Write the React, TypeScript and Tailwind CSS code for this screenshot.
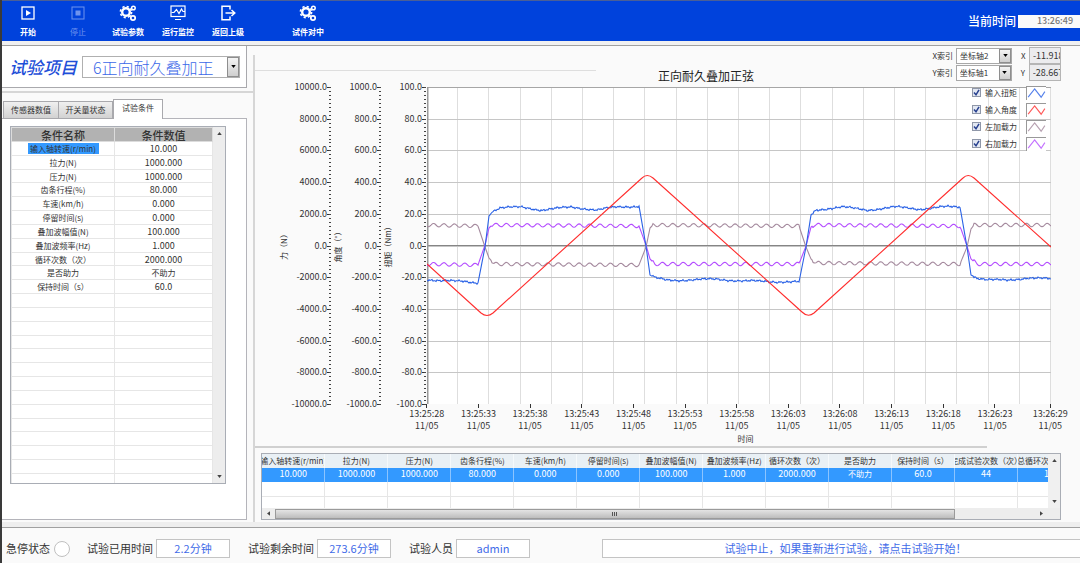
import type { ReactNode } from 'react';

interface ToolButtonProps {
  label: string;
  disabled?: boolean;
  className?: string;
  children: ReactNode;
}

interface Signal {
  name: string;
  color: string;
  path: string;
}

type Knot = [number, number];

const conditions = [
  ['输入轴转速(r/min)', '10.000'],
  ['拉力(N)', '1000.000'],
  ['压力(N)', '1000.000'],
  ['齿条行程(%)', '80.000'],
  ['车速(km/h)', '0.000'],
  ['停留时间(s)', '0.000'],
  ['叠加波幅值(N)', '100.000'],
  ['叠加波频率(Hz)', '1.000'],
  ['循环次数（次）', '2000.000'],
  ['是否助力', '不助力'],
  ['保持时间（s）', '60.0'],
];

const resultColumns = [
  ...conditions,
  ['完成试验次数（次）', '44'],
  ['总循环次数（次）', '10'],
];

const timeLabels = [
  '13:25:28', '13:25:33', '13:25:38', '13:25:43', '13:25:48', '13:25:53', '13:25:58',
  '13:26:03', '13:26:08', '13:26:13', '13:26:18', '13:26:23', '13:26:29',
];

const axes = [
  { title: '力（N）', scale: 100, tickX: 76, titleX: 32 },
  { title: '角度（°）', scale: 10, tickX: 126, titleX: 86 },
  { title: '扭矩（Nm）', scale: 1, tickX: 171, titleX: 136 },
];

const PLOT_W = 624;
const PLOT_H = 317;
const STEPS = Array.from({ length: 11 }, (_, i) => i);

// Numbers are set one size larger than Chinese text
const valueSize = (value: string) => (/^[\d.]+$/.test(value) ? 'text-[9px]' : 'text-[8px]');

// Linear interpolation through the knots
const levelAt = (knots: Knot[], x: number) => {
  for (let i = 1; i < knots.length; i++) {
    const [x0, y0] = knots[i - 1];
    const [x1, y1] = knots[i];
    if (x <= x1) return y0 + ((y1 - y0) * (x - x0)) / (x1 - x0);
  }
  return knots[knots.length - 1][1];
};

// Reversals of the rack direction, no ripple is visible there
const reversals = [51, 212, 372, 533];
const inReversal = (x: number) => reversals.some(r => x > r && x < r + 14);

const tracePath = (knots: Knot[], ripple: (x: number) => number) => {
  const points: string[] = [];
  for (let x = 0; x <= PLOT_W; x++) {
    const y = levelAt(knots, x) + (inReversal(x) ? 0 : ripple(x));
    points.push(`${x} ${y.toFixed(1)}`);
  }
  return `M${points.join('L')}`;
};

const wave = (x: number) => -1.7 * Math.sin(((x - 4) * Math.PI * 2) / 10.4);
const noise = (x: number) =>
  0.6 * Math.sin(x * 2.3) + 0.5 * Math.sin(x * 0.9 + 1) + 0.7 * Math.sin(x * 0.13);

const torque: Knot[] = [
  [0, 193], [20, 193], [45, 196], [51, 196], [58, 160], [62, 129], [66, 124], [73, 121], [95, 120], [115, 123],
  [145, 120], [170, 123], [190, 120], [212, 119], [219, 159], [223, 188], [228, 191], [240, 193], [265, 193],
  [290, 192], [315, 194], [372, 195], [379, 160], [384, 128], [389, 123], [396, 122], [415, 120], [440, 123],
  [468, 120], [492, 122], [515, 120], [533, 120], [540, 160], [544, 188], [550, 191], [560, 193], [580, 193],
  [600, 191], [624, 192],
];
const angle =
  'M0 177L54 226Q60 231 66 226L215 91Q220 86 226 91L375 225Q381 231 387 226L536 91Q541 86 547 91L624 160';
const leftForce: Knot[] = [
  [0, 138], [51, 139], [58, 160], [62, 171], [67, 177], [212, 178], [219, 160], [223, 141], [226, 138],
  [372, 139], [379, 160], [384, 172], [389, 176], [533, 177], [540, 160], [544, 142], [547, 138], [624, 138],
];
const rightForce: Knot[] = [
  [0, 177], [51, 178], [58, 158], [62, 141], [65, 138], [212, 139], [219, 158], [223, 172], [228, 177],
  [372, 177], [379, 159], [384, 140], [387, 138], [533, 139], [540, 159], [544, 172], [550, 177], [624, 177],
];

const signals: Signal[] = [
  { name: '输入扭矩', color: '#2a62e6', path: tracePath(torque, noise) },
  { name: '输入角度', color: '#ff2e2e', path: angle },
  { name: '左加载力', color: '#a58a9e', path: tracePath(leftForce, wave) },
  { name: '右加载力', color: '#b44dff', path: tracePath(rightForce, wave) },
];

function ToolButton({ label, disabled, className = '', children }: ToolButtonProps) {
  return (
    <button
      disabled={disabled}
      className={`w-[50px] h-full pt-[3px] flex flex-col items-center text-white text-[8px] leading-3 font-bold whitespace-nowrap disabled:text-[#6f93ee] disabled:font-normal ${className}`}
    >
      <span className="h-[18px] mb-1 flex items-center justify-center">{children}</span>
      {label}
    </button>
  );
}

function GearsIcon() {
  return (
    <svg viewBox="0 0 18 18" className="size-[18px]" fill="none" stroke="currentColor">
      <circle cx="7" cy="8" r="3.8" strokeWidth="2.4" />
      <circle cx="7" cy="8" r="5.6" strokeWidth="1.6" strokeDasharray="2.2 2.2" />
      <circle cx="14.4" cy="4" r="1.8" strokeWidth="1.5" />
      <circle cx="14" cy="14" r="2.2" strokeWidth="1.7" />
      <path d="M10.5 5.5l2-1M10.5 11l1.6 1.5" strokeWidth="1.2" />
    </svg>
  );
}

function Arrow({ className = '' }: { className?: string }) {
  return (
    <svg viewBox="0 0 6 4" className={`w-[5px] h-[3px] ${className}`}>
      <path d="M0 0h6L3 4z" fill="currentColor" />
    </svg>
  );
}

function DropButton() {
  return (
    <span className="absolute right-px inset-y-px w-3 flex items-center justify-center border border-[#8e8e8e] bg-linear-to-b from-[#f4f4f4] to-[#cfcfcf] text-black pointer-events-none">
      <Arrow />
    </span>
  );
}

function IndexRow({ axis, option, value }: { axis: string; option: string; value: string }) {
  return (
    <div className="flex items-center text-[8px] text-[#333]">
      <label htmlFor={`index-${axis}`} className="mr-[3px]">{axis}索引</label>
      <div className="relative mr-[9px]">
        <select
          id={`index-${axis}`}
          className="appearance-none block w-[56px] h-4 pl-[3px] border border-[#a8a8a8] bg-white text-[8px] leading-3"
        >
          <option>{option}</option>
        </select>
        <DropButton />
      </div>
      <label htmlFor={`cursor-${axis}`} className="w-2">{axis}</label>
      <input
        id={`cursor-${axis}`}
        readOnly
        defaultValue={value}
        className="w-8 h-[17px] pl-[3px] border border-[#b5b5b5] bg-[#ececee] text-[9px]"
      />
    </div>
  );
}

function StatusField({ id, label, value }: { id: string; label: string; value: string }) {
  return (
    <div className="flex items-center mr-[18px]">
      <label htmlFor={id} className="mr-[3px]">{label}</label>
      <input
        id={id}
        readOnly
        defaultValue={value}
        className="w-[74px] h-[19px] border border-[#c4c4c4] bg-white text-center text-[#3f6be8]"
      />
    </div>
  );
}

function Toolbar() {
  return (
    <header className="h-[41px] flex items-center bg-[#0042dc] border-t border-[#4a5f96] pl-px">
      <ToolButton label="开始">
        <svg viewBox="0 0 14 14" className="size-[14px]" fill="none" stroke="currentColor" strokeWidth="1.3">
          <rect x="1" y="1" width="12" height="12" />
          <path d="M5 4v6l5-3z" fill="currentColor" stroke="none" />
        </svg>
      </ToolButton>
      <ToolButton label="停止" disabled>
        <svg viewBox="0 0 14 14" className="size-[14px]" fill="none" stroke="currentColor" strokeWidth="1">
          <rect x="1" y="1" width="12" height="12" />
          <rect x="4.5" y="4.5" width="5" height="5" fill="currentColor" stroke="none" />
        </svg>
      </ToolButton>
      <ToolButton label="试验参数">
        <GearsIcon />
      </ToolButton>
      <ToolButton label="运行监控">
        <svg viewBox="0 0 16 16" className="size-4" fill="none" stroke="currentColor" strokeWidth="1.2">
          <rect x="1" y="1" width="14" height="10.5" />
          <path d="M1.5 7.5H4l2.5-3 2.5 4 2.5-4.5 1.5 2.5h2M5 14.5h6" />
        </svg>
      </ToolButton>
      <ToolButton label="返回上级">
        <svg viewBox="0 0 16 16" className="size-4" fill="none" stroke="currentColor" strokeWidth="1.5">
          <path d="M10 4.5V1.2H2v13.6h8v-3.3M5.5 8h9M11.5 5l3.3 3-3.3 3" />
        </svg>
      </ToolButton>
      <ToolButton label="试件对中" className="ml-[30px]">
        <GearsIcon />
      </ToolButton>
      <div className="ml-auto flex items-center">
        <label htmlFor="clock" className="mr-[2px] text-white text-[12px] font-medium">当前时间</label>
        <input
          id="clock"
          readOnly
          defaultValue="13:26:49"
          className="w-[62px] h-[13px] pl-3 bg-[#fafafa] text-center text-[9px] text-[#777] font-medium"
        />
      </div>
    </header>
  );
}

function ConditionTable() {
  return (
    <div className="w-[216px] h-[358px] flex border border-[#a9adb5] bg-white">
      <div className="flex-1 overflow-hidden">
        <table className="w-full h-[361px] table-fixed border-collapse text-center text-[8px] leading-[11px] text-[#333]">
          <thead>
            <tr className="h-[14px] bg-[#b2b2b2] text-[11px] leading-3">
              <th className="w-[103px] p-0 font-medium border border-[#dcdcdc]">条件名称</th>
              <th className="p-0 font-medium border border-[#dcdcdc]">条件数值</th>
            </tr>
          </thead>
          <tbody>
            {Array.from({ length: 25 }, (_, i) => {
              const [name, value] = conditions[i] ?? ['\u00a0', '\u00a0'];
              return (
                <tr key={i} className="h-[13px]">
                  <td className="p-0 border border-[#e6e6e6]">
                    <span className={i === 0 ? 'block w-[71px] mx-auto bg-[#3399ff]' : 'block'}>{name}</span>
                  </td>
                  <td className={`p-0 border border-[#e6e6e6] ${valueSize(value)} leading-[11px]`}>{value}</td>
                </tr>
              );
            })}
          </tbody>
        </table>
      </div>
      <div className="w-3 py-[5px] flex flex-col items-center justify-between bg-[#ededed] text-[#444]">
        <Arrow className="rotate-180" />
        <Arrow />
      </div>
    </div>
  );
}

function Sidebar() {
  return (
    <aside className="w-[245px] mb-[2px] shrink-0 flex flex-col">
      <div className="h-[42px] pl-[7px] flex items-center bg-white border-r border-b border-[#a9a9ad]">
        <label htmlFor="project" className="w-[73px] text-[17px] text-[#1f4fd8] font-medium italic">试验项目</label>
        <div className="relative">
          <select
            id="project"
            className="appearance-none block w-[158px] h-[22px] pl-[10px] border border-[#b0b0b0] bg-white text-[16px] leading-5 font-light text-[#3c68e8]"
          >
            <option>6正向耐久叠加正</option>
          </select>
          <DropButton />
        </div>
      </div>
      <div className="w-[252px] h-[5px] mb-[6px] border-b-2 border-[#d6d6d6]" />
      <div className="relative z-10 -mb-px flex items-end pl-px text-[8px] text-[#333]">
        <button className="w-[56px] h-[18px] border border-[#a9a9ad] bg-linear-to-b from-[#f0f0f0] to-[#d2d2d2]">传感器数值</button>
        <button className="w-[55px] h-[18px] -ml-px border border-[#a9a9ad] bg-linear-to-b from-[#f0f0f0] to-[#d2d2d2]">开关量状态</button>
        <button className="w-[50px] h-5 pb-1 border border-b-0 border-[#a9a9ad] bg-white">试验条件</button>
      </div>
      <div className="flex-1 pt-[7px] pb-8 pl-2 bg-white border border-l-0 border-[#b4b4ba]">
        <ConditionTable />
      </div>
    </aside>
  );
}

function AxisScales() {
  return (
    <svg width="172" height={PLOT_H} className="shrink-0 overflow-visible" fill="#333" fontSize="9">
      {axes.map(axis => (
        <g key={axis.title}>
          {STEPS.map(i => {
            const y = Math.round((i * PLOT_H) / 10);
            return (
              <g key={i}>
                <path d={`M${axis.tickX - 4} ${y + 0.5}h4`} stroke="#333" />
                <text x={axis.tickX - 4} y={y + 3} textAnchor="end">
                  {((5 - i) * 20 * axis.scale).toFixed(1)}
                </text>
              </g>
            );
          })}
          {Array.from({ length: 81 }, (_, i) => (
            <path key={i} d={`M${axis.tickX - 2} ${Math.round((i * PLOT_H) / 80) + 0.5}h2`} stroke="#444" />
          ))}
          <text transform={`translate(${axis.titleX} 158) rotate(-90)`} textAnchor="middle" fontSize="8">
            {axis.title}
          </text>
        </g>
      ))}
    </svg>
  );
}

function Plot() {
  return (
    <svg
      viewBox={`0 0 ${PLOT_W} ${PLOT_H}`}
      preserveAspectRatio="none"
      className="block w-full h-[317px] bg-white"
      fill="none"
    >
      {Array.from({ length: 20 }, (_, i) => (
        <path key={i} d={`M${Math.round((i + 1) * 31.2) - 0.5} 0V${PLOT_H}`} stroke="#dedede" />
      ))}
      {STEPS.slice(0, 10).map(i => (
        <path key={i} d={`M0 ${Math.round((i * PLOT_H) / 10) + 0.5}H${PLOT_W}`} stroke={i === 0 ? '#a6a6a6' : '#c6c6c6'} />
      ))}
      <path d={`M0 158.5H${PLOT_W}`} stroke="#858585" />
      <path d={`M0.5 0V${PLOT_H}`} stroke="#999" strokeWidth="2" />
      {[2, 3, 0, 1].map(i => (
        <path
          key={signals[i].name}
          d={signals[i].path}
          stroke={signals[i].color}
          strokeWidth="1.1"
          vectorEffect="non-scaling-stroke"
        />
      ))}
    </svg>
  );
}

function Legend() {
  return (
    <div className="absolute top-[-2px] right-[5px] flex flex-col gap-[2px]">
      {signals.map(signal => (
        <div key={signal.name} className="h-[15px] flex items-center text-[8px] text-[#333]">
          <label className="relative w-[54px] flex items-center gap-1">
            <input
              type="checkbox"
              defaultChecked
              className="peer appearance-none size-[9px] border border-[#8f97a8] bg-[#e3e8f2]"
            />
            <svg viewBox="0 0 9 9" className="absolute left-0 size-[9px] hidden peer-checked:block" fill="none" stroke="#27408f" strokeWidth="1.5">
              <path d="M2 4.5l2 2.3L7 1.8" />
            </svg>
            {signal.name}
          </label>
          <svg viewBox="0 0 20 14" className="w-5 h-[14px] border-t border-l border-[#999] bg-white" fill="none">
            <path d="M1 11l7-9 7 9 4-6" stroke={signal.color} strokeWidth="1.2" strokeOpacity="0.8" />
          </svg>
        </div>
      ))}
    </div>
  );
}

function ChartPanel() {
  return (
    <section>
      <div className="h-[41px] flex items-start">
        <div className="w-[341px] mt-[24px] border-t border-[#dedede]" />
        <h2 className="ml-[62px] mt-[21px] text-[12px] leading-[18px] text-[#222]">正向耐久叠加正弦</h2>
        <div className="ml-auto mr-[19px] mt-px flex flex-col">
          <IndexRow axis="X" option="坐标轴2" value="-11.918" />
          <IndexRow axis="Y" option="坐标轴1" value="-28.667" />
        </div>
      </div>
      <div className="flex pr-[29px]">
        <AxisScales />
        <div className="relative flex-1 min-w-0">
          <Plot />
          <Legend />
        </div>
      </div>
      <div className="ml-[146px] grid grid-cols-[repeat(12,516fr)_592fr] text-center text-[9px] leading-3 text-[#333]">
        {timeLabels.map(time => (
          <div key={time} className="flex flex-col items-center">
            <span className="w-px h-1 bg-[#333]" />
            <span>{time}</span>
            <span>11/05</span>
          </div>
        ))}
      </div>
      <div className="h-[14px] pl-[156px] text-center text-[8px] leading-[14px] text-[#333]">时间</div>
      <div className="w-[732px] border-t-2 border-[#d0d0d0]" />
    </section>
  );
}

function ResultTable() {
  return (
    <div className="ml-[6px] mr-[19px] mt-[5px] border border-[#a9adb5] bg-white">
      <div className="h-[54px] flex">
        <div className="flex-1 min-w-0 overflow-hidden">
          <table className="w-[819px] table-fixed border-collapse text-center">
            <thead>
              <tr className="h-[14px] bg-[#e9f0f5] text-[8px] text-[#333]">
                {resultColumns.map(([name]) => (
                  <th key={name} className="p-0 font-normal align-top border-r border-[#f6f9fb]">
                    <div className="flex justify-center overflow-hidden whitespace-nowrap leading-[13px]">
                      <span>{name}</span>
                    </div>
                  </th>
                ))}
              </tr>
            </thead>
            <tbody>
              <tr className="h-[14px] bg-[#3399ff] text-white">
                {resultColumns.map(([name, value]) => (
                  <td key={name} className={`p-0 align-top border-r border-[#8cc4ff] ${valueSize(value)} leading-3`}>{value}</td>
                ))}
              </tr>
              {[0, 1].map(row => (
                <tr key={row} className="h-[14px]">
                  {resultColumns.map(([name]) => (
                    <td key={name} className="p-0 border-r border-b border-[#e6e6e6]" />
                  ))}
                </tr>
              ))}
            </tbody>
          </table>
        </div>
        <div className="w-3 py-[5px] flex flex-col items-center justify-between bg-[#f0f0f0] text-[#444]">
          <Arrow className="rotate-180" />
          <Arrow />
        </div>
      </div>
      <div className="h-[11px] pl-1 pr-4 flex items-center bg-[#ededed] text-[#444]">
        <Arrow className="rotate-90 mr-1" />
        <div className="flex-1">
          <div className="w-[89%] h-[10px] flex items-center justify-center gap-px border border-[#9a9a9a] bg-linear-to-b from-[#e4e4e4] to-[#bdbdbd]">
            <span className="w-px h-1 bg-[#555]" />
            <span className="w-px h-1 bg-[#555]" />
            <span className="w-px h-1 bg-[#555]" />
          </div>
        </div>
        <Arrow className="-rotate-90" />
      </div>
    </div>
  );
}

function StatusBar() {
  return (
    <footer className="h-[36px] pl-1 pt-[11px] flex items-start bg-[#fafafa] border-t border-[#a0a0a0] text-[11px] leading-[19px] text-[#333]">
      <div className="flex items-center mr-[17px]">
        <span className="mr-1">急停状态</span>
        <span className="size-4 rounded-full border border-[#c0c0c0] bg-white" />
      </div>
      <StatusField id="elapsed" label="试验已用时间" value="2.2分钟" />
      <StatusField id="remaining" label="试验剩余时间" value="273.6分钟" />
      <StatusField id="operator" label="试验人员" value="admin" />
      <input
        aria-label="系统消息"
        readOnly
        defaultValue="试验中止，如果重新进行试验，请点击试验开始！"
        className="ml-[54px] flex-1 min-w-0 h-[19px] pl-2 border border-r-0 border-[#c4c4c4] bg-white text-center text-[#3f6be8]"
      />
    </footer>
  );
}

export default function App() {
  return (
    <div className="min-h-screen flex flex-col border-l-2 border-[#3a3a3a] bg-[#fafafa] font-['Noto_Sans_CJK_SC',sans-serif] overflow-hidden">
      <Toolbar />
      <div className="h-[5px] bg-[#f0f0f0] border-b border-[#a0a0a0]" />
      <main className="flex-1 flex">
        <Sidebar />
        <div className="w-[6px] shrink-0" />
        <div className="w-[2px] mt-[9px] shrink-0 bg-[#d6d6d6]" />
        <div className="flex-1 min-w-0">
          <ChartPanel />
          <ResultTable />
        </div>
      </main>
      <div className="h-[5px] bg-[#eeeeee]" />
      <StatusBar />
    </div>
  );
}
